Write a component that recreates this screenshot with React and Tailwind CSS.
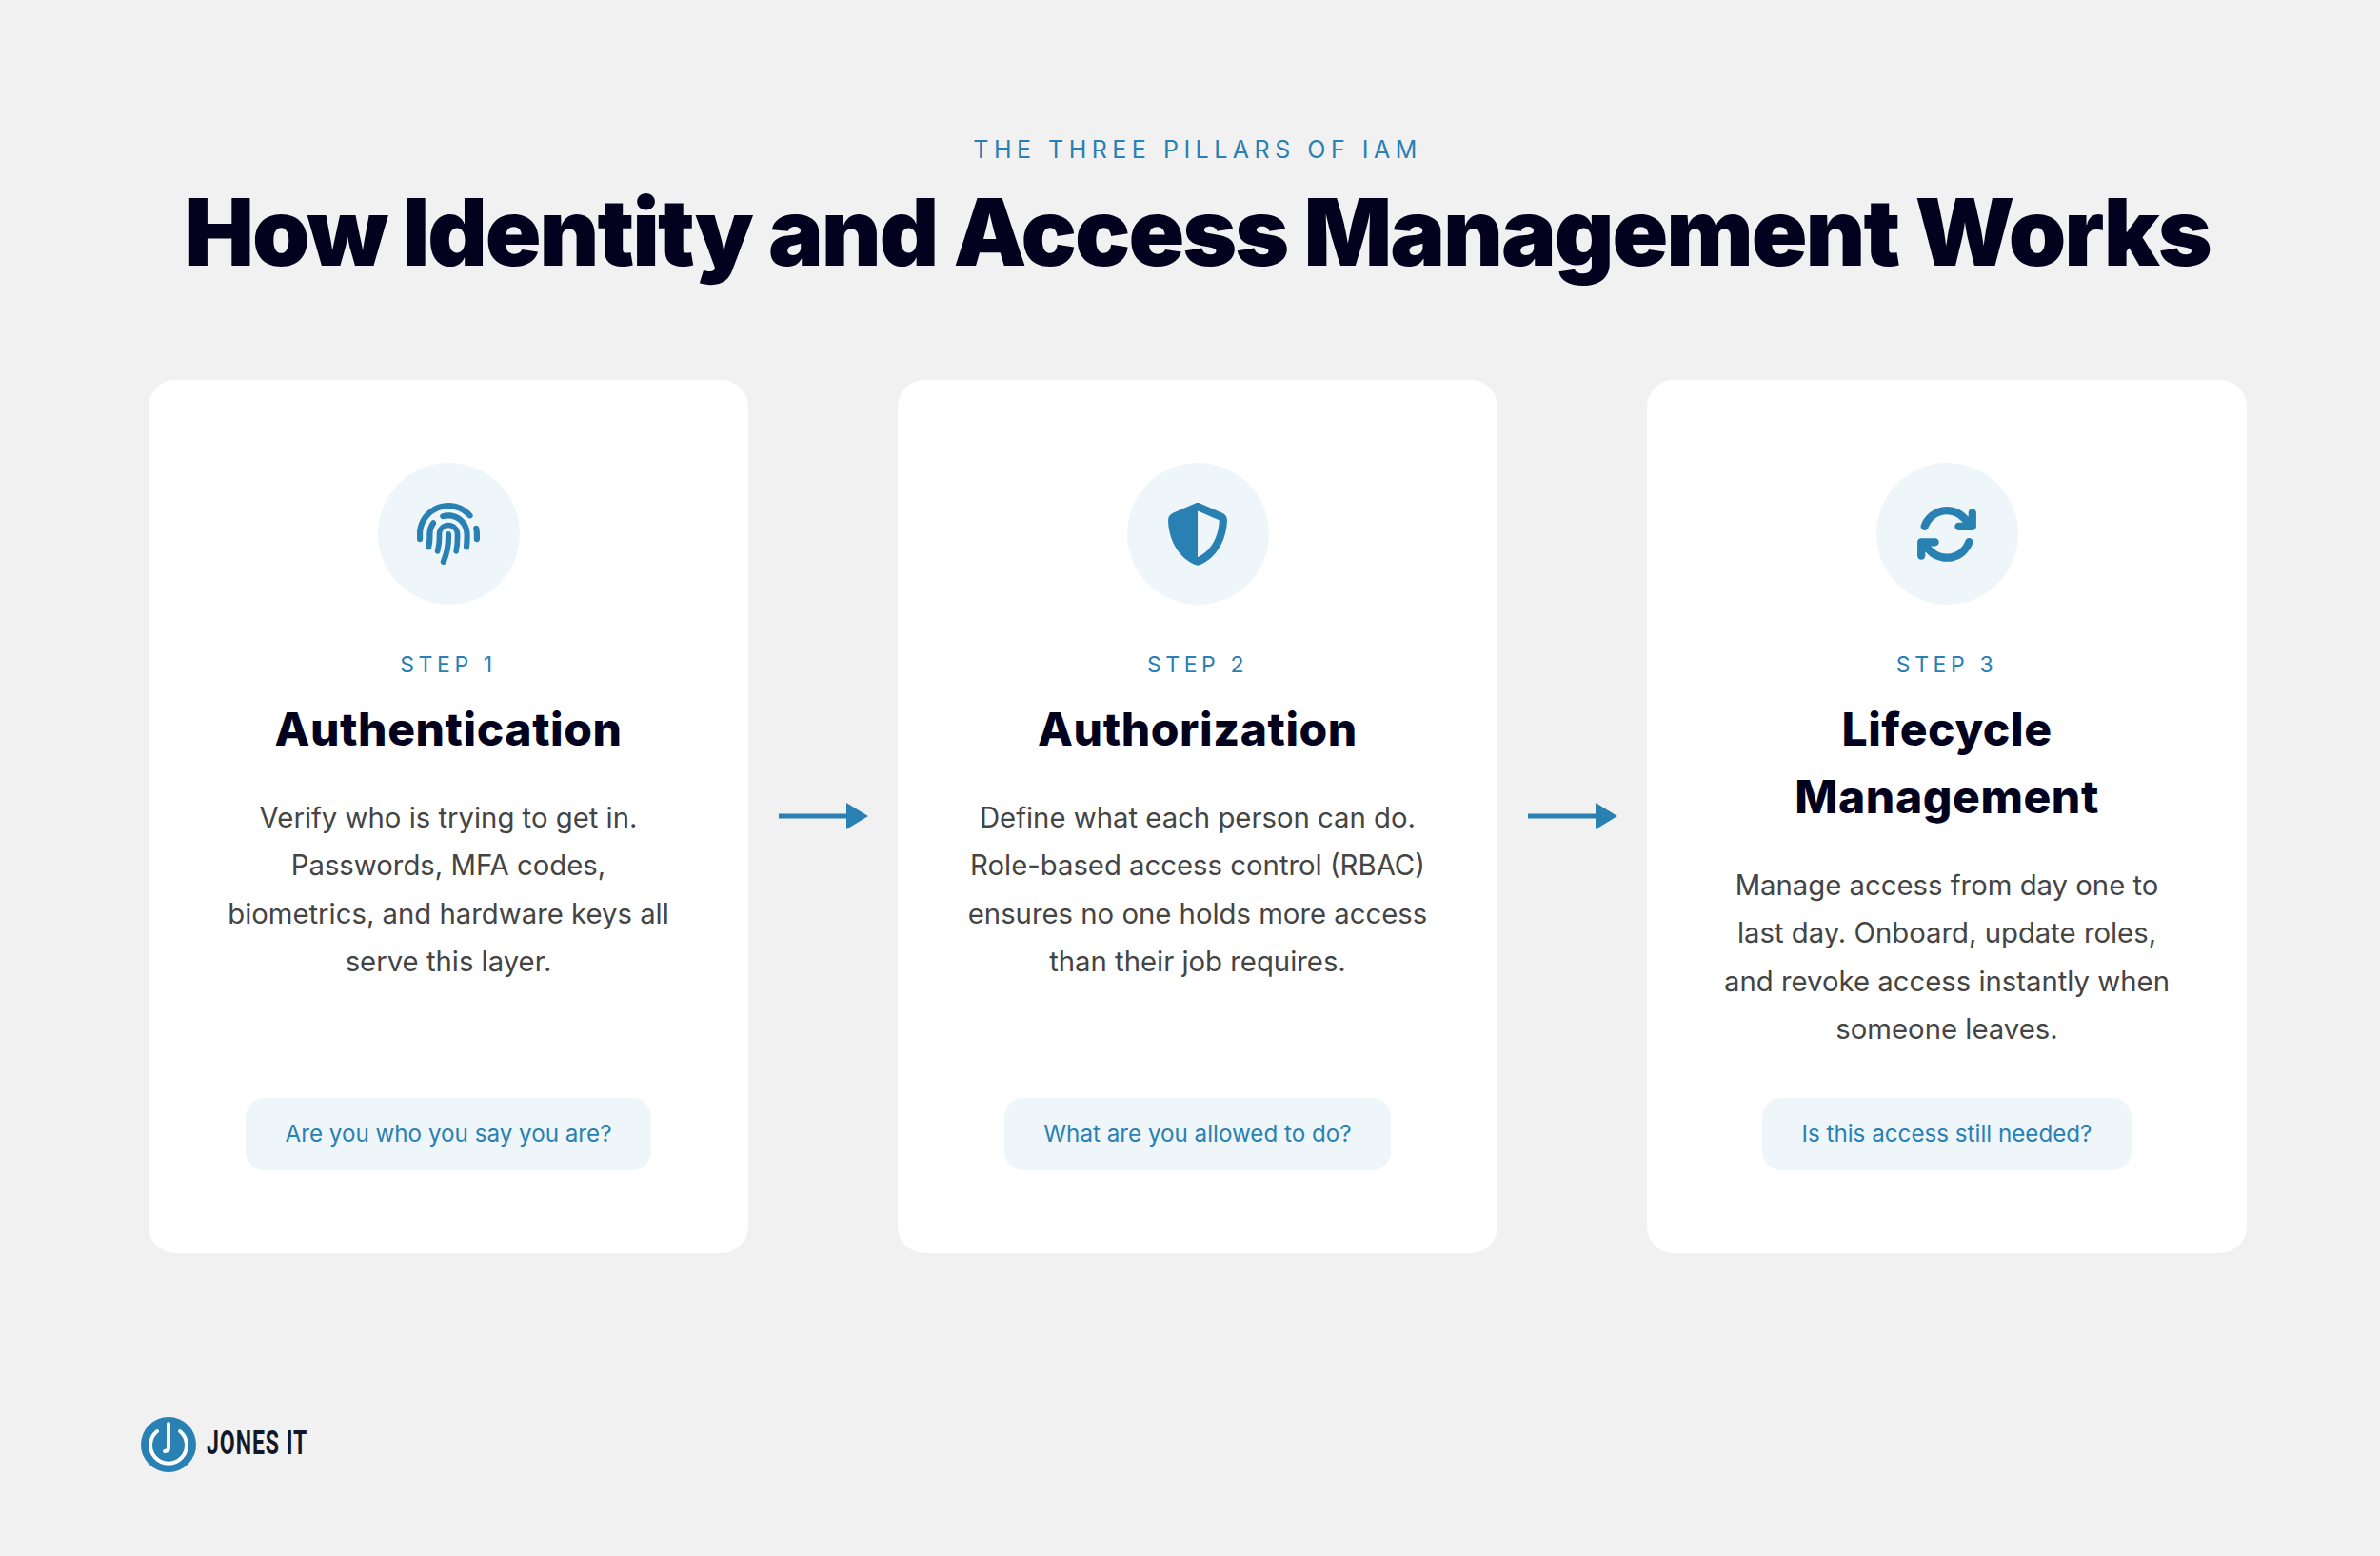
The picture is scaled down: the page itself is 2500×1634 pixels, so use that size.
import { FaFingerprint, FaShieldHalved, FaArrowsRotate } from "react-icons/fa6";

const steps = [
  {
    step: "STEP 1",
    title: ["Authentication"],
    lines: ["Verify who is trying to get in.", "Passwords, MFA codes,", "biometrics, and hardware keys all", "serve this layer."],
    question: "Are you who you say you are?",
    Icon: FaFingerprint,
  },
  {
    step: "STEP 2",
    title: ["Authorization"],
    lines: ["Define what each person can do.", "Role-based access control (RBAC)", "ensures no one holds more access", "than their job requires."],
    question: "What are you allowed to do?",
    Icon: FaShieldHalved,
  },
  {
    step: "STEP 3",
    title: ["Lifecycle", "Management"],
    lines: ["Manage access from day one to", "last day. Onboard, update roles,", "and revoke access instantly when", "someone leaves."],
    question: "Is this access still needed?",
    Icon: FaArrowsRotate,
  },
];

const Arrow = () => (
  <div className="flex w-[157px] shrink-0 items-center justify-center">
    <svg width="94" height="28" viewBox="0 0 94 28" className="text-[#2980b3]">
      <rect x="0" y="11.5" width="72" height="5" fill="currentColor" />
      <polygon points="71,0 94,14 71,28" fill="currentColor" />
    </svg>
  </div>
);

const Card = ({ item }) => {
  const { Icon } = item;
  return (
    <div className="flex w-[630px] shrink-0 flex-col items-center rounded-[28px] bg-white pt-[87px] pb-[87px] text-center">
      <div className="flex h-[149px] w-[149px] items-center justify-center rounded-full bg-[#eff6fa] text-[66px] text-[#2980b3]">
        <Icon />
      </div>
      <p className="mt-[47px] text-[23px] leading-[32px] tracking-[0.2em] text-[#2980b3] font-['Inter',sans-serif]">
        {item.step}
      </p>
      <h2 className="mt-[16px] text-[48px] font-extrabold leading-[71px] tracking-[0.012em] text-[#02021e] font-['Inter',sans-serif]">
        {item.title.map((t) => (
          <span key={t} className="block">{t}</span>
        ))}
      </h2>
      <div className="mt-[33px] mb-[46px] text-[29.3px] leading-[50.4px] text-[#444444] font-['Inter',sans-serif]">
        {item.lines.map((l) => (
          <span key={l} className="block whitespace-nowrap">{l}</span>
        ))}
      </div>
      <div className="mt-auto flex h-[76px] items-center rounded-[20px] bg-[#eff6fa] px-[41px] pt-[2px] text-[24.2px] text-[#2980b3] font-['Inter',sans-serif]">
        {item.question}
      </div>
    </div>
  );
};

export default function App() {
  return (
    <div className="flex h-[1634px] w-full flex-col bg-[#f1f1f1]">
      <header className="pt-[140px] pl-[16px] text-center">
        <p className="text-[25px] leading-[34px] tracking-[0.22em] text-[#2980b3] font-['Inter',sans-serif]">
          THE THREE PILLARS OF IAM
        </p>
        <h1 className="mt-[11px] whitespace-nowrap text-[97px] font-black leading-[118px] tracking-[-0.021em] text-[#02021e] font-['Inter',sans-serif]">
          How Identity and Access Management Works
        </h1>
      </header>
      <main className="mt-[96px] flex items-stretch pl-[156px]">
        {steps.map((item, i) => (
          <div key={item.step} className="flex items-stretch">
            <Card item={item} />
            {i < steps.length - 1 && <Arrow />}
          </div>
        ))}
      </main>
      <footer className="mt-[172px] flex items-center gap-[11px] pl-[148px]">
        <svg width="58" height="58" viewBox="0 0 58 58">
          <circle cx="29" cy="29" r="29" fill="#2980b3" />
          <path d="M17 15 A19 19 0 1 0 41 15" fill="none" stroke="#fff" strokeWidth="4" strokeLinecap="round" />
          <path d="M29 7 V32 Q29 36 25 36" fill="none" stroke="#fff" strokeWidth="4" strokeLinecap="round" />
        </svg>
        <span className="origin-left scale-x-[0.66] whitespace-nowrap text-[35px] font-bold tracking-[0.04em] text-[#111827] font-['Roboto',sans-serif]">
          JONES IT
        </span>
      </footer>
    </div>
  );
}
